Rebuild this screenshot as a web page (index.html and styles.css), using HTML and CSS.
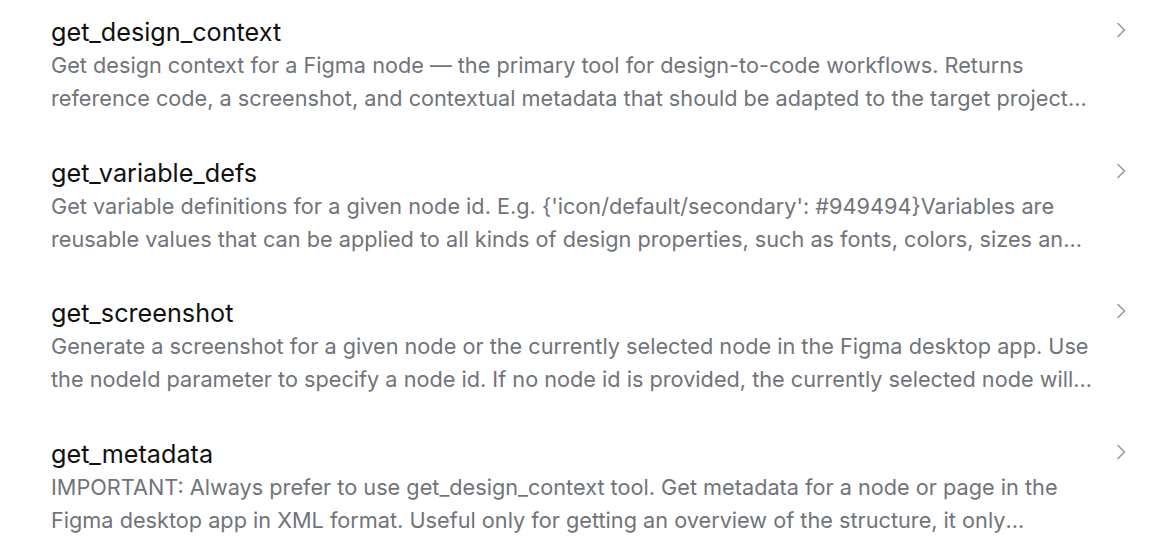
FILE: index.html
```html
<!DOCTYPE html>
<html lang="en">
<head>
<meta charset="utf-8">
<link rel="stylesheet" href="styles.css">
</head>
<body>
<ul class="tool-list">
  <li class="tool">
    <div class="tool-text">
      <div class="tool-name">get_design_context</div>
      <div class="tool-desc">Get design context for a Figma node — the primary tool for design-to-code workflows. Returns reference code, a screenshot, and contextual metadata that should be adapted to the target project's stack, conventions, and design system.</div>
    </div>
    <svg class="chevron" viewBox="0 0 10 16" width="10" height="16"><path d="M2 1.5 L8.5 8 L2 14.5" fill="none" stroke="currentColor" stroke-width="1.6" stroke-linecap="round" stroke-linejoin="round"/></svg>
  </li>
  <li class="tool">
    <div class="tool-text">
      <div class="tool-name">get_variable_defs</div>
      <div class="tool-desc">Get variable definitions for a given node id. E.g. {'icon/default/secondary': #949494}Variables are reusable values that can be applied to all kinds of design properties, such as fonts, colors, sizes and spacings.</div>
    </div>
    <svg class="chevron" viewBox="0 0 10 16" width="10" height="16"><path d="M2 1.5 L8.5 8 L2 14.5" fill="none" stroke="currentColor" stroke-width="1.6" stroke-linecap="round" stroke-linejoin="round"/></svg>
  </li>
  <li class="tool">
    <div class="tool-text">
      <div class="tool-name">get_screenshot</div>
      <div class="tool-desc">Generate a screenshot for a given node or the currently selected node in the Figma desktop app. Use the nodeId parameter to specify a node id. If no node id is provided, the currently selected node will be used.</div>
    </div>
    <svg class="chevron" viewBox="0 0 10 16" width="10" height="16"><path d="M2 1.5 L8.5 8 L2 14.5" fill="none" stroke="currentColor" stroke-width="1.6" stroke-linecap="round" stroke-linejoin="round"/></svg>
  </li>
  <li class="tool">
    <div class="tool-text">
      <div class="tool-name">get_metadata</div>
      <div class="tool-desc">IMPORTANT: Always prefer to use get_design_context tool. Get metadata for a node or page in the Figma desktop app in XML format. Useful only for getting an overview of the structure, it only includes node IDs, layer types, names, positions and sizes.</div>
    </div>
    <svg class="chevron" viewBox="0 0 10 16" width="10" height="16"><path d="M2 1.5 L8.5 8 L2 14.5" fill="none" stroke="currentColor" stroke-width="1.6" stroke-linecap="round" stroke-linejoin="round"/></svg>
  </li>
</ul>
</body>
</html>
```

FILE: styles.css
```css
html, body {
  margin: 0;
  padding: 0;
  background: #ffffff;
}

body {
  font-family: Inter, "Noto Sans", sans-serif;
  -webkit-font-smoothing: antialiased;
}

.tool-list {
  list-style: none;
  margin: 0;
  padding: 15px 0 0 51px;
  width: 1075px;
}

.tool {
  display: flex;
  align-items: flex-start;
  gap: 24px;
  height: 140.5px;
}

.tool-text {
  flex: 1;
  min-width: 0;
}

.tool-name {
  font-size: 25.2px;
  line-height: 34px;
  color: #111111;
}

.tool-desc {
  font-size: 21.7px;
  line-height: 33px;
  color: #71737a;
  display: -webkit-box;
  -webkit-line-clamp: 2;
  -webkit-box-orient: vertical;
  overflow: hidden;
}

.chevron {
  flex: none;
  margin-top: 7px;
  color: #9a9a9a;
}
```
